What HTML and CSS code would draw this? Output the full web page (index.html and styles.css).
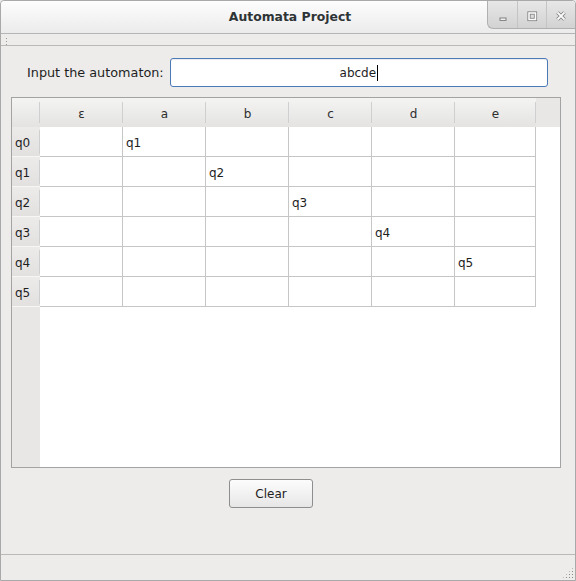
FILE: index.html
```html
<!DOCTYPE html>
<html>
<head>
<meta charset="utf-8">
<link rel="stylesheet" href="styles.css">
</head>
<body>
<div class="window">
  <div class="titlebar">
    <div class="spacer"></div>
    <div class="title">Automata Project</div>
    <div class="wbuttons">
      <div class="wbtn">
        <svg width="12" height="12" viewBox="0 0 12 12"><rect x="3" y="8" width="6" height="2.4" fill="#fbfbfb" stroke="#7e7e7e" stroke-width="1"/></svg>
      </div>
      <div class="wbtn">
        <svg width="12" height="12" viewBox="0 0 12 12"><rect x="3" y="3" width="6.5" height="6.5" fill="none" stroke="#7e7e7e" stroke-width="3.2"/><rect x="3" y="3" width="6.5" height="6.5" fill="none" stroke="#fbfbfb" stroke-width="1.6"/></svg>
      </div>
      <div class="wbtn">
        <svg width="12" height="12" viewBox="0 0 12 12"><path d="M2.5 2.5 L9.5 9.5 M9.5 2.5 L2.5 9.5" stroke="#7e7e7e" stroke-width="3.4"/><path d="M2.5 2.5 L9.5 9.5 M9.5 2.5 L2.5 9.5" stroke="#fbfbfb" stroke-width="1.8"/></svg>
      </div>
    </div>
  </div>
  <div class="toolbar"><div class="handle"></div></div>
  <div class="central">
    <div class="inputrow">
      <label class="lbl">Input the automaton:</label>
      <div class="field"><span class="ftext">abcde</span><span class="caret"></span></div>
    </div>
    <div class="table">
      <div class="corner"></div>
      <div class="hcell">ε</div>
      <div class="hcell">a</div>
      <div class="hcell">b</div>
      <div class="hcell">c</div>
      <div class="hcell">d</div>
      <div class="hcell">e</div>
      <div class="hfill"></div>

      <div class="vcell">q0</div>
      <div class="cell"></div><div class="cell">q1</div><div class="cell"></div><div class="cell"></div><div class="cell"></div><div class="cell"></div><div class="rfill"></div>
      <div class="vcell">q1</div>
      <div class="cell"></div><div class="cell"></div><div class="cell">q2</div><div class="cell"></div><div class="cell"></div><div class="cell"></div><div class="rfill"></div>
      <div class="vcell">q2</div>
      <div class="cell"></div><div class="cell"></div><div class="cell"></div><div class="cell">q3</div><div class="cell"></div><div class="cell"></div><div class="rfill"></div>
      <div class="vcell">q3</div>
      <div class="cell"></div><div class="cell"></div><div class="cell"></div><div class="cell"></div><div class="cell">q4</div><div class="cell"></div><div class="rfill"></div>
      <div class="vcell">q4</div>
      <div class="cell"></div><div class="cell"></div><div class="cell"></div><div class="cell"></div><div class="cell"></div><div class="cell">q5</div><div class="rfill"></div>
      <div class="vcell">q5</div>
      <div class="cell"></div><div class="cell"></div><div class="cell"></div><div class="cell"></div><div class="cell"></div><div class="cell"></div><div class="rfill"></div>

      <div class="vfill"></div>
      <div class="bfill"></div>
    </div>
    <div class="btnrow">
      <button class="btn">Clear</button>
    </div>
  </div>
  <div class="statusbar"><div class="grip"></div></div>
</div>
</body>
</html>
```

FILE: styles.css
```css
html, body {
  margin: 0;
  padding: 0;
  background: #edeceb;
}
.window {
  width: 576px;
  height: 581px;
  box-sizing: border-box;
  border: 1px solid #a9a9a9;
  border-top-left-radius: 4px;
  border-top-right-radius: 4px;
  background: #edeceb;
  display: flex;
  flex-direction: column;
  font-family: "DejaVu Sans", sans-serif;
  font-size: 12px;
  color: #1e1e1e;
  overflow: hidden;
}
.titlebar {
  height: 32px;
  flex: none;
  border-bottom: 1px solid #b5b5b5;
  background: linear-gradient(#fdfdfd, #ebebeb);
  display: grid;
  grid-template-columns: 1fr auto 1fr;
  align-items: start;
  border-top-left-radius: 3px;
  border-top-right-radius: 3px;
}
.title {
  font-weight: bold;
  font-size: 12.4px;
  color: #2e3436;
  line-height: 32px;
  padding-left: 4px;
}
.wbuttons {
  justify-self: end;
  display: flex;
  height: 29px;
  margin-top: -1px;
  box-sizing: border-box;
  border-left: 1px solid #b0b0b0;
  border-bottom: 1px solid #b0b0b0;
  border-bottom-left-radius: 6px;
  background: linear-gradient(#e8e8e8, #d2d2d2);
  overflow: hidden;
}
.wbtn {
  width: 29px;
  display: flex;
  align-items: center;
  justify-content: center;
  padding-top: 3px;
  box-sizing: border-box;
}
.wbtn + .wbtn {
  border-left: 1px solid #c4c4c4;
}
.toolbar {
  height: 12px;
  flex: none;
  border-bottom: 1px solid #b9b9b9;
  background: #edeceb;
  padding: 3px 0 0 4px;
  box-sizing: border-box;
}
.handle {
  width: 4px;
  height: 8px;
  background-image: radial-gradient(circle, #9a9a9a 0.7px, transparent 0.8px);
  background-size: 3px 3px;
}
.central {
  flex: 1;
  padding: 12px 14px 0 10px;
  display: flex;
  flex-direction: column;
}
.inputrow {
  display: flex;
  align-items: center;
  height: 29px;
  padding: 0 13px 0 16px;
  gap: 6px;
}
.lbl {
  font-size: 12.8px;
  color: #1e1e1e;
}
.field {
  flex: 1;
  height: 29px;
  box-sizing: border-box;
  border: 1px solid #4a7ab8;
  border-radius: 3px;
  background: #fff;
  box-shadow: inset 0 1px 1px rgba(0,0,0,0.08);
  display: flex;
  align-items: center;
  justify-content: center;
  padding-top: 1px;
}
.ftext {
  font-size: 12px;
  color: #1e1e1e;
}
.caret {
  width: 1px;
  height: 16px;
  background: #000;
  margin-left: 1px;
}
.table {
  margin-top: 10px;
  height: 371px;
  box-sizing: border-box;
  border: 1px solid #a3a3a3;
  background: #fff;
  display: grid;
  grid-template-columns: 28px repeat(5, 83px) 81px 1fr;
  grid-template-rows: 29px repeat(6, 30px) 1fr;
}
.corner, .hcell {
  background:
    linear-gradient(#cfcfcf, #cfcfcf) right 4px / 1px 21px no-repeat,
    linear-gradient(#f4f4f3, #e4e3e2);
}
.hcell {
  display: flex;
  align-items: center;
  justify-content: center;
  color: #2e2e2e;
  padding-top: 3px;
  box-sizing: border-box;
}
.hfill {
  background: #e8e7e6;
}
.vcell {
  background:
    linear-gradient(#cfcfcf, #cfcfcf) right 3px / 1px 24px no-repeat,
    linear-gradient(#ecebea, #e2e1e0);
  border-bottom: 1px solid #f6f6f6;
  box-sizing: border-box;
  display: flex;
  align-items: center;
  padding: 3px 0 0 3px;
  color: #1e1e1e;
}
.cell {
  border-right: 1px solid #c6c6c6;
  border-bottom: 1px solid #c6c6c6;
  box-sizing: border-box;
  display: flex;
  align-items: center;
  padding: 3px 0 0 3px;
  color: #1e1e1e;
}
.rfill {
  background: #fff;
}
.vfill {
  background: #e8e7e6;
}
.bfill {
  grid-column: span 7;
  background: #fff;
}
.btnrow {
  display: flex;
  justify-content: center;
  padding-top: 11px;
  padding-right: 30px;
}
.btn {
  width: 84px;
  height: 29px;
  border: 1px solid #8e8e8e;
  border-radius: 3px;
  background: linear-gradient(#fcfcfc, #f2f2f2 50%, #e6e6e6);
  font-family: "DejaVu Sans", sans-serif;
  font-size: 12px;
  color: #1e1e1e;
  padding: 1px 0 0;
}
.statusbar {
  height: 26px;
  flex: none;
  border-top: 1px solid #b9b9b9;
  box-sizing: border-box;
  display: flex;
  justify-content: flex-end;
  align-items: flex-end;
  padding: 0 1px 1px 0;
}
.grip {
  width: 12px;
  height: 12px;
  background-image: radial-gradient(circle, #8a8a8a 0.9px, transparent 1px);
  background-size: 3px 3px;
  clip-path: polygon(100% 0, 100% 100%, 0 100%);
}
```
